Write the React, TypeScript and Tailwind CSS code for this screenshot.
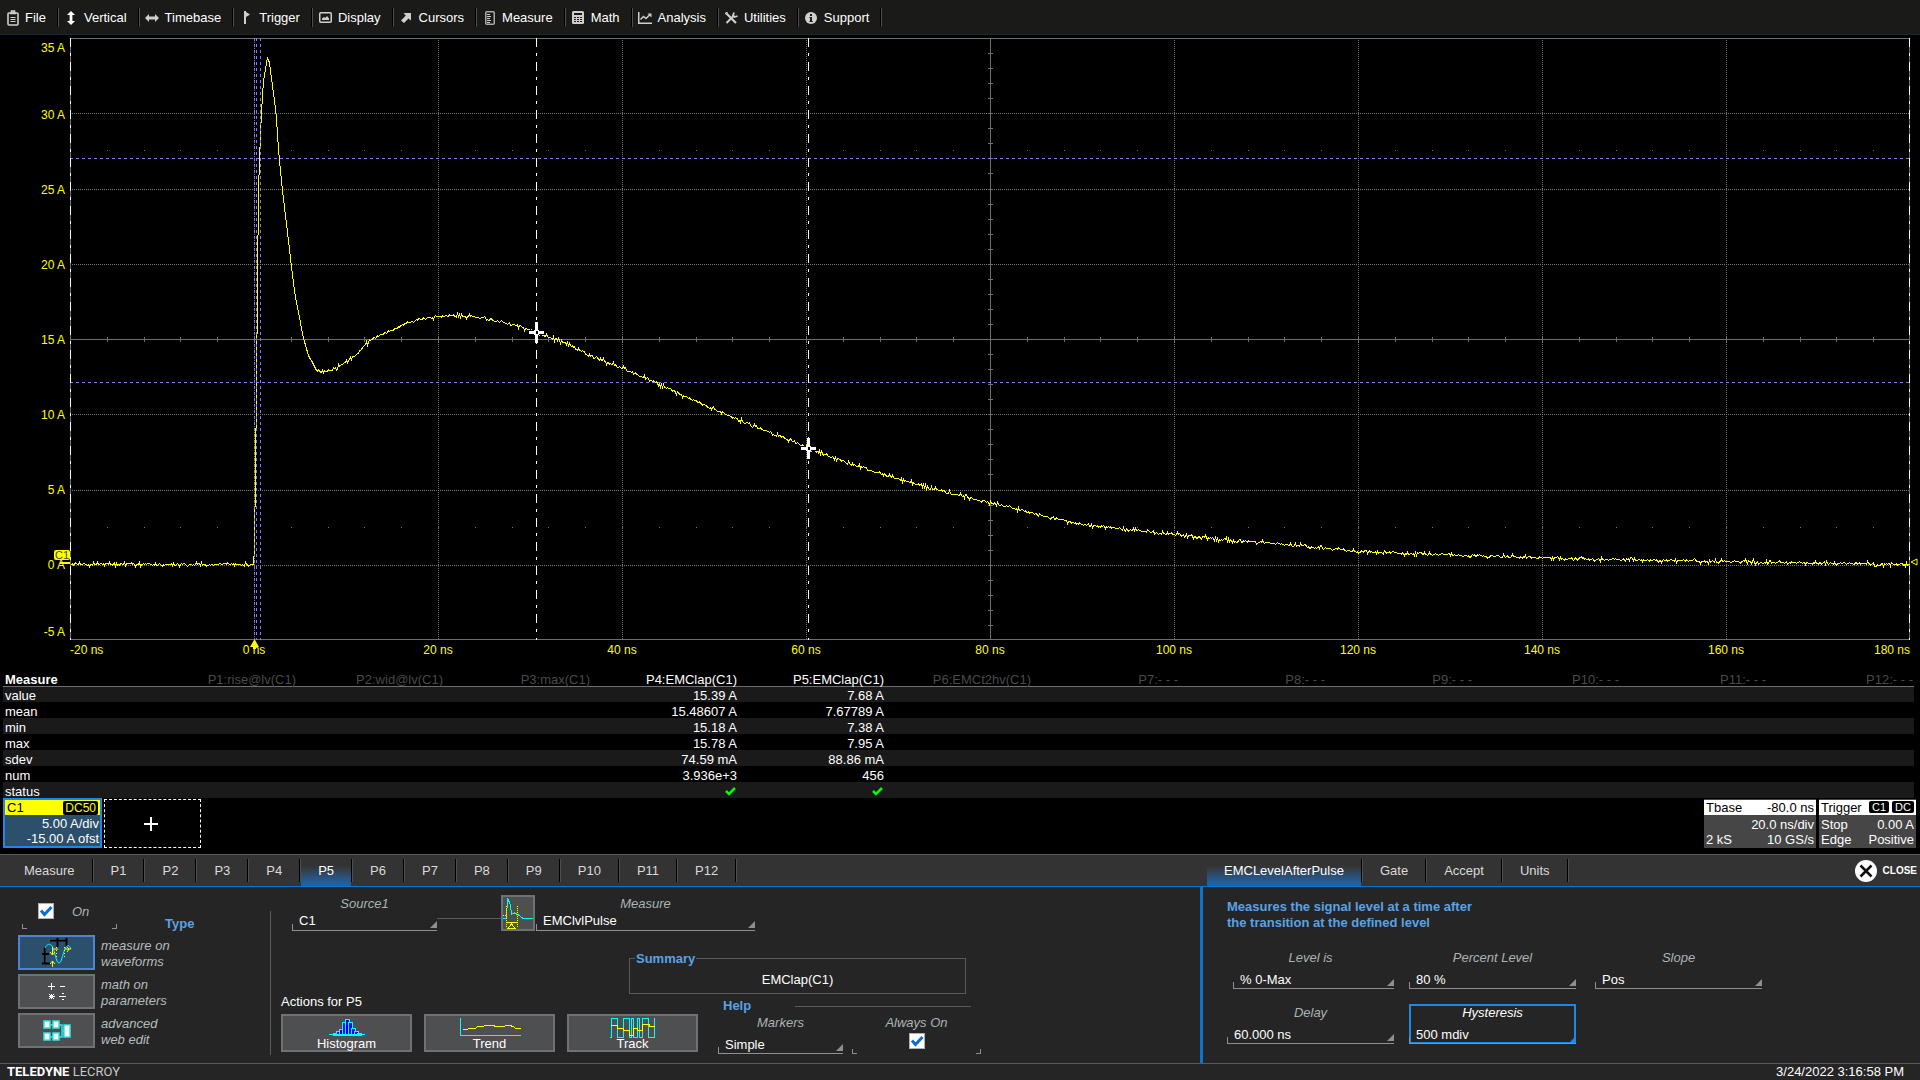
import React, { useId } from 'react';
import clsx from 'clsx';

/* ---------- menu bar ---------- */

const menuIcons: Record<string, React.ReactNode> = {
    File: (
        <svg width="12" height="16" viewBox="0 0 12 16" fill="none" stroke="#cfcfcf">
            <rect x="1" y="3" width="10" height="12" rx="1" strokeWidth="1.6" />
            <path d="M3 3.5h6M4.5 1h3v2h-3z" strokeWidth="1.6" />
            <path d="M3.5 7.5h5M3.5 9.5h5M3.5 11.5h5" />
        </svg>
    ),
    Vertical: (
        <svg width="8" height="14" viewBox="0 0 8 14" fill="#fff">
            <path d="M4 0l4 4H5.4v6H8l-4 4-4-4h2.6V4H0z" />
        </svg>
    ),
    Timebase: (
        <svg width="14" height="8" viewBox="0 0 14 8" fill="#cfcfcf">
            <path d="M0 4l4-4v2.6h6V0l4 4-4 4V5.4H4V8z" />
        </svg>
    ),
    Trigger: (
        <svg width="6" height="13" viewBox="0 0 6 13" fill="#cfcfcf">
            <path d="M0 0h2v13H0zM2 1l4 2.5L2 6z" />
        </svg>
    ),
    Display: (
        <svg width="13" height="11" viewBox="0 0 13 11">
            <rect x="0.75" y="0.75" width="11.5" height="9.5" rx="1" fill="none" stroke="#cfcfcf" strokeWidth="1.5" />
            <path d="M3 8V6.5L5 5l1.2 1L8 4l2 2.5V8z" fill="#cfcfcf" />
        </svg>
    ),
    Cursors: (
        <svg width="10" height="11" viewBox="0 0 10 11" fill="#cfcfcf">
            <path d="M2.5 1H10v7.5L7.5 6.5 3 11 0 8.5 4.8 3.4z" />
        </svg>
    ),
    Measure: (
        <svg width="10" height="14" viewBox="0 0 10 14">
            <rect x="0.75" y="0.75" width="8.5" height="12.5" rx="1" fill="none" stroke="#a8a8a8" strokeWidth="1.5" />
            <path d="M2 3.5h3M2 5.5h4M2 7.5h3M2 9.5h4M2 11.5h3" stroke="#cfcfcf" />
        </svg>
    ),
    Math: (
        <svg width="12" height="13" viewBox="0 0 12 13">
            <rect width="12" height="13" rx="1.5" fill="#cfcfcf" />
            <rect x="2" y="2" width="8" height="2" fill="#1a1a19" />
            <path d="M2 6.5h8M2 8.5h8M2 10.5h8" stroke="#1a1a19" strokeDasharray="2 1" />
        </svg>
    ),
    Analysis: (
        <svg width="14" height="12" viewBox="0 0 14 12" fill="none" stroke="#cfcfcf" strokeWidth="1.5">
            <path d="M0.75 0v11.25H14M2.5 7.5l3-3 2.5 2 4-4" />
            <path d="M9.5 1.500h4v4z" fill="#cfcfcf" stroke="none" />
        </svg>
    ),
    Utilities: (
        <svg width="13" height="12" viewBox="0 0 13 12" fill="none" stroke="#cfcfcf">
            <path d="M1.5 1.5L11 11" strokeWidth="2.2" />
            <path d="M1.5 11L9 3.5" strokeWidth="2" />
            <path d="M9 0.5l-1 3 1.5 1.5 3-1" strokeWidth="1.8" />
            <path d="M0 2l2.5-2" strokeWidth="1.5" />
        </svg>
    ),
    Support: (
        <svg width="12" height="12" viewBox="0 0 12 12">
            <circle cx="6" cy="6" r="6" fill="#cfcfcf" />
            <path d="M5 2h2v2H5zM4.5 5H7v4h.7v1H4.5V9H5V6h-.5z" fill="#1a1a19" />
        </svg>
    ),
};

const menuItems = ['File', 'Vertical', 'Timebase', 'Trigger', 'Display', 'Cursors', 'Measure', 'Math', 'Analysis', 'Utilities', 'Support'];

function Separator() {
    return <span className="w-[2px] self-stretch border-l border-r border-l-black border-r-[#4e4e4e]" />;
}

function MenuBar() {
    return (
        <nav className="flex h-[35px] items-stretch border-b border-[#1b2735] bg-[#1a1a19] pt-2 pb-[7px]">
            {menuItems.map((item) => (
                <button key={item} className="flex items-stretch text-white">
                    <span className="flex w-[25px] items-center justify-center">{menuIcons[item]}</span>
                    <span className="self-center pr-[11px]">{item}</span>
                    <Separator />
                </button>
            ))}
        </nav>
    );
}

/* ---------- waveform grid ---------- */

// trace samples in plot pixels
const samples: [number, number][] = [
    [0, 526], [183, 526], [184, 510], [185, 430], [186, 352], [187, 244], [188, 152], [189, 122], [190, 95], [191, 74],
    [192, 57], [193, 42], [195, 31], [197, 19], [199, 24], [200, 33], [202, 47], [204, 62], [206, 80], [207, 97],
    [209, 122], [212, 152], [215, 177], [218, 202], [222, 237], [225, 259], [229, 279], [233, 300], [238, 317],
    [242, 324], [246, 332], [252, 333], [262, 332], [270, 327], [285, 317], [295, 306], [303, 300], [320, 292],
    [330, 287], [345, 282], [360, 279], [375, 277], [390, 277], [410, 279], [430, 283], [450, 288], [466, 294],
    [490, 303], [520, 317], [552, 330], [580, 342], [610, 356], [640, 369], [670, 382], [700, 394], [738, 410],
    [770, 422], [810, 435], [850, 447], [890, 457], [920, 464], [960, 474], [1007, 485], [1055, 491], [1106, 496],
    [1150, 501], [1204, 505], [1289, 513], [1340, 515], [1399, 517], [1465, 519], [1534, 521], [1657, 523],
    [1767, 525], [1840, 526],
];

function tracePath() {
    let seed = 7;
    const rand = () => {
        seed = (seed * 16807) % 2147483647;
        return seed / 2147483647;
    };
    let d = '';
    let k = 0;
    for (let x = 0; x < 1840; x++) {
        while (samples[k + 1][0] < x) k++;
        const [x0, y0] = samples[k];
        const [x1, y1] = samples[k + 1];
        let y = y0 + ((y1 - y0) * (x - x0)) / (x1 - x0);
        const r = rand();
        if (x < 180 || x > 246) {
            if (r < 0.22) y += 1;
            else if (r < 0.44) y -= 1;
            else if (r < 0.51) y += 2;
            else if (r < 0.58) y -= 2;
        }
        d += `${d ? 'L' : 'M'}${x + 0.5} ${Math.round(y) + 0.5}`;
    }
    return d;
}

const trace = tracePath();
const gridX = [184, 368, 552, 736, 1104, 1288, 1472, 1656];
const gridY = [75, 151, 226, 376, 452, 527];
const ticksX = Array.from({ length: 49 }, (_, i) => Math.round((i + 1) * 36.8));
const ticksY = Array.from({ length: 39 }, (_, i) => Math.round((i + 1) * 15.05));
const markers = [[466, 294], [738, 410]];

function Plot() {
    return (
        <svg className="min-w-0 flex-1" viewBox="0 0 1840 602" preserveAspectRatio="none" fill="none" shapeRendering="crispEdges">
            <g stroke="#787878" strokeDasharray="1 1">
                {gridX.map((x) => <path key={x} d={`M${x + 0.5} 0V602`} />)}
                {gridY.map((y) => <path key={y} d={`M0 ${y + 0.5}H1840`} />)}
            </g>
            <g stroke="#6e6e6e">
                <path d="M0.5 0.5H1839.5V601.5H0.5zM0 301.5H1840M920.5 0V602" />
                {ticksX.map((x) => <path key={x} d={`M${x + 0.5} 299V304M${x} 112.5h1M${x} 489.5h1`} />)}
                {ticksY.map((y) => <path key={y} d={`M918 ${y + 0.5}H923`} />)}
            </g>
            <path d={trace} stroke="#ffff00" />
            <path d="M184.5 0V602M186.5 0V602M190.5 0V602M0 120.5H1840M0 344.5H1840" stroke="#8080ff" strokeDasharray="3 3" />
            <path d="M0.5 0V602M466.5 0V602M738.5 0V602M1839.5 0V602" stroke="#fff" strokeDasharray="9 6 3 6" />
            {markers.map(([x, y]) => (
                <g key={x}>
                    <path d={`M${x - 9} ${y - 2}h19v5h-19z`} fill="#000" />
                    <path d={`M${x - 1} ${y - 10}h3v21h-3zM${x - 7} ${y - 1}h15v3h-15z`} fill="#fff" />
                    <path d={`M${x - 2} ${y - 2}h5v5h-5z`} fill="#fff" />
                    <path d={`M${x} ${y - 1}h2v3h-2z`} fill="#000" />
                </g>
            ))}
        </svg>
    );
}

const amps = ['35 A', '30 A', '25 A', '20 A', '15 A', '10 A', '5 A', '0 A', '-5 A'];
const times = ['-20 ns', '0 ns', '20 ns', '40 ns', '60 ns', '80 ns', '100 ns', '120 ns', '140 ns', '160 ns', '180 ns'];

function WaveformGrid() {
    return (
        <main className="flex min-h-[400px] flex-1 flex-col pt-[3px] text-[12px] text-[#ffff00]">
            <div className="flex flex-1">
                <div className="flex w-[70px] flex-col pt-[2px] pr-[5px] text-right">
                    {amps.map((a, i) => (
                        <div
                            key={a}
                            className={clsx(
                                'flex justify-end',
                                i === 0 ? 'flex-1 items-start' : i === 8 ? 'flex-1 items-end' : 'flex-[2] items-center'
                            )}
                        >
                            {a === '0 A' ? (
                                <span className="relative leading-[10px]">
                                    {a}
                                    <span className="absolute -top-[10px] -right-[5px] flex h-[10px] w-4 items-center justify-center rounded-[2px] bg-[#ffff00] text-[11px] leading-[10px] text-[#4a4a00]">
                                        C1
                                    </span>
                                    <span className="absolute top-[2px] -right-[5px] h-[2px] w-[10px] bg-[#ffff00]" />
                                </span>
                            ) : (
                                <span>{a}</span>
                            )}
                        </div>
                    ))}
                </div>
                <Plot />
                <div className="flex w-[10px] flex-col">
                    <span className="flex-[7]" />
                    <svg className="h-2" width="8" height="8" fill="none" stroke="#ffff00">
                        <path d="M1 4L7 1V7z" />
                    </svg>
                    <span className="flex-1" />
                </div>
            </div>
            <div className="flex h-[30px] pt-[2px] pr-[10px] pl-[70px]">
                {times.map((t, i) => (
                    <div
                        key={t}
                        className={clsx(i === 0 ? 'flex-1 text-left' : i === 10 ? 'flex-1 text-right' : 'flex-[2] text-center')}
                    >
                        {t === '0 ns' ? (
                            <span className="relative">
                                {t}
                                <svg className="absolute -top-[3px] left-1/2 -ml-1" width="9" height="9" fill="#ffff00">
                                    <path d="M4 0h1l4 7H6v2H3V7H0z" />
                                </svg>
                            </span>
                        ) : (
                            t
                        )}
                    </div>
                ))}
            </div>
        </main>
    );
}

/* ---------- measure table ---------- */

const params = [
    'P1:rise@lv(C1)', 'P2:wid@lv(C1)', 'P3:max(C1)', 'P4:EMClap(C1)', 'P5:EMClap(C1)', 'P6:EMCt2hv(C1)',
    'P7:- - -', 'P8:- - -', 'P9:- - -', 'P10:- - -', 'P11:- - -', 'P12:- - -',
];

const stats: [string, string, string][] = [
    ['value', '15.39 A', '7.68 A'],
    ['mean', '15.48607 A', '7.67789 A'],
    ['min', '15.18 A', '7.38 A'],
    ['max', '15.78 A', '7.95 A'],
    ['sdev', '74.59 mA', '88.86 mA'],
    ['num', '3.936e+3', '456'],
    ['status', 'ok', 'ok'],
];

function Cell({ value }: { value: string }) {
    if (value !== 'ok') return <>{value}</>;
    return (
        <svg className="ml-auto block" width="12" height="10" fill="none" stroke="#00ff00" strokeWidth="2.5">
            <path d="M1 4l3 3 6-6" />
        </svg>
    );
}

function MeasureTable() {
    return (
        <div className="pr-[6px] pl-[3px]">
            <table className="w-full table-fixed border-separate border-spacing-0 leading-[12px] text-white">
                <thead>
                    <tr className="h-4">
                        <th scope="col" className="pt-1 pl-[2px] text-left font-bold">Measure</th>
                        {params.map((p, i) => (
                            <th
                                key={p}
                                scope="col"
                                className={clsx(
                                    'pt-1 pr-px text-right font-normal whitespace-nowrap',
                                    i === 3 || i === 4 ? 'text-white' : 'text-[#4a4a4a]'
                                )}
                            >
                                {p}
                            </th>
                        ))}
                    </tr>
                </thead>
                <tbody>
                    {stats.map(([name, p4, p5], row) => (
                        <tr key={name} className={clsx('h-4', row % 2 === 0 && 'bg-[#1a1a1a]')}>
                            {[name, '', '', '', p4, p5, '', '', '', '', '', '', ''].map((v, i) => {
                                const cls = clsx(
                                    row === 0 ? 'border-t border-[#6e6e6e] pt-[3px]' : 'pt-1',
                                    i === 0 ? 'pl-[2px] text-left font-normal' : 'pr-px text-right'
                                );
                                return i === 0 ? (
                                    <th key={i} scope="row" className={cls}>{v}</th>
                                ) : (
                                    <td key={i} className={cls}><Cell value={v} /></td>
                                );
                            })}
                        </tr>
                    ))}
                </tbody>
            </table>
        </div>
    );
}

/* ---------- descriptor boxes ---------- */

function Descriptors() {
    return (
        <div className="flex h-14 items-start pr-1 pb-[6px] pl-[3px] leading-[15px] text-white">
            <button className="h-[50px] w-[99px] border-2 border-[#1a8ae8] bg-[#2c4f6c] text-right">
                <span className="flex h-[15px] items-center justify-between bg-[#ffff00] px-[2px] text-black">
                    C1
                    <span className="rounded-[2px] bg-black px-[2px] text-[12px] leading-[14px] text-[#ffff00]">DC50</span>
                </span>
                <span className="block pt-px pr-px">5.00 A/div</span>
                <span className="block pr-px">-15.00 A ofst</span>
            </button>
            <button
                aria-label="Add trace"
                className="mt-px ml-[2px] flex h-[49px] w-[97px] items-center justify-center border border-dashed border-white pr-[3px]"
            >
                <svg width="14" height="14" stroke="#fff" strokeWidth="2">
                    <path d="M7 0V14M0 7H14" />
                </svg>
            </button>
            <button className="mt-px ml-auto h-[49px] w-[112px] bg-[#464646]">
                <span className="flex h-[15px] justify-between bg-white px-[2px] text-black"><span>Tbase</span><span>-80.0 ns</span></span>
                <span className="block px-[2px] pt-[2px] text-right">20.0 ns/div</span>
                <span className="flex justify-between px-[2px]"><span>2 kS</span><span>10 GS/s</span></span>
            </button>
            <button className="mt-px ml-[3px] h-[49px] w-[97px] bg-[#464646]">
                <span className="flex h-[15px] items-start bg-white px-[2px] text-black">
                    <span className="flex-1 text-left">Trigger</span>
                    <span className="mt-px rounded-[2px] bg-black px-[3px] text-[11px] leading-[12px] text-white">C1</span>
                    <span className="mt-px ml-[3px] rounded-[2px] bg-black px-[3px] text-[11px] leading-[12px] text-white">DC</span>
                </span>
                <span className="flex justify-between px-[2px] pt-[2px]"><span>Stop</span><span>0.00 A</span></span>
                <span className="flex justify-between px-[2px]"><span>Edge</span><span>Positive</span></span>
            </button>
        </div>
    );
}

/* ---------- dialog ---------- */

function Tab({ label, active, first }: { label: string; active?: boolean; first?: boolean }) {
    return (
        <button role="tab" aria-selected={!!active} className={clsx('flex items-stretch', first && 'pl-[7px]')}>
            <span
                className={clsx(
                    'flex items-center px-[17px]',
                    active ? 'bg-linear-to-b from-[#333333] from-35% to-[#0b67b6] text-white' : 'text-[#dadada]'
                )}
            >
                {label}
            </span>
            <span className="flex items-stretch py-1"><Separator /></span>
        </button>
    );
}

interface FieldProps {
    label: string;
    value: string;
    kind?: 'select' | 'text';
    tall?: boolean;
    focused?: boolean;
    className?: string;
    controlClass?: string;
}

function Field({ label, value, kind = 'select', tall, focused, className, controlClass }: FieldProps) {
    const id = useId();
    const control = clsx(
        'block h-full w-full appearance-none bg-transparent pl-[7px] text-white outline-none',
        tall ? 'pt-[6px]' : 'pt-px'
    );
    return (
        <div className={clsx('flex flex-col', focused && 'outline-2 -outline-offset-2 outline-[#1a8ae8]', className)}>
            <label
                htmlFor={id}
                className={clsx('h-4 text-center leading-[18px] italic', focused ? 'text-white' : 'text-[#a9b4b4]')}
            >
                {label}
            </label>
            <div className={clsx('relative border-b border-[#8f8f8f]', tall ? 'h-6' : 'h-5', controlClass)}>
                {kind === 'select' ? (
                    <select id={id} className={control} defaultValue={value}>
                        <option>{value}</option>
                    </select>
                ) : (
                    <input id={id} type="text" className={control} defaultValue={value} />
                )}
                <span className="pointer-events-none absolute bottom-0 left-0 h-[6px] w-px bg-[#8f8f8f]" />
                <svg
                    className={clsx('pointer-events-none absolute right-0', focused ? 'bottom-0 text-[#1a8ae8]' : 'bottom-[2px] text-[#8f8f8f]')}
                    width="7"
                    height="7"
                    fill="currentColor"
                >
                    <path d="M0 7L7 0V7z" />
                </svg>
            </div>
        </div>
    );
}

function Check({ id }: { id: string }) {
    return (
        <span className="relative block size-4">
            <input id={id} type="checkbox" defaultChecked className="peer block size-4 appearance-none border border-[#b0b0b0] bg-white" />
            <svg className="pointer-events-none absolute inset-0 hidden peer-checked:block" width="16" height="16" fill="none" stroke="#0a6fd0" strokeWidth="3">
                <path d="M3 7.500l3.500 4L13.500 4" />
            </svg>
        </span>
    );
}

// corner marks under a check box
function Corners() {
    return (
        <>
            <span className="absolute bottom-0 left-0 size-[5px] border-b border-l border-[#8f8f8f]" />
            <span className="absolute right-0 bottom-0 size-[5px] border-r border-b border-[#8f8f8f]" />
        </>
    );
}

const typeIcons = {
    waveforms: (
        <svg width="32" height="29" fill="none">
            <path d="M2.5 9v17M8.5 1.5H26" stroke="#777" />
            <path d="M3.5 9v17M1 16h7M1 25.5h8M9 2.5h17M16.5 0v9M25.5 0v9" stroke="#000" strokeWidth="2" />
            <path d="M4 10c2-4 5-5 7-2 3 5 4 17 7 17s4-12 7-16c2-2 3-2 5 2" stroke="#00ffff" />
            <path d="M11.5 9v8M9 14l2.5 3 2.5-3M11.5 29v-6M9 26l2.5-3 2.5 3M13 11h4M24 11h6M26 9l2 2-2 3" stroke="#ffff00" />
            <path d="M15.5 9v12M23.5 9v12" stroke="#ffff00" strokeDasharray="1 2" />
        </svg>
    ),
    math: (
        <svg width="20" height="20" stroke="#fff" shapeRendering="crispEdges">
            <path d="M4.500 1v7M1 4.500h7M13 4.500h5M12 14.500h7" />
            <path d="M15 11.500h2M15 17.500h2M2 12l5 5M7 12l-5 5M1.500 14.500h6M4.500 12v5" />
        </svg>
    ),
    web: (
        <svg width="28" height="22" fill="#fff" stroke="#2fe6e6" strokeWidth="1.5">
            <path d="M7 5h4M7 17h4M16 5h3v6h3M16 17h3v-5" fill="none" />
            <rect x="1" y="1" width="6" height="7" />
            <rect x="10" y="1" width="6" height="7" />
            <rect x="1" y="13" width="6" height="7" />
            <rect x="10" y="13" width="6" height="7" />
            <rect x="21" y="5" width="6" height="12" />
        </svg>
    ),
};

function TypeRow({ icon, lines, active }: { icon: React.ReactNode; lines: [string, string]; active?: boolean }) {
    return (
        <button className="flex h-[35px] items-center text-left italic">
            <span
                className={clsx(
                    'flex h-[35px] w-[77px] items-center justify-center border-2',
                    active ? 'border-[#4a84dc] bg-[#2c4f6c]' : 'border-[#707172] bg-[#4e4f51]'
                )}
            >
                {icon}
            </span>
            <span className="pt-[2px] pl-[6px] text-[#b4bebe]">
                {lines[0]}
                <br />
                {lines[1]}
            </span>
        </button>
    );
}

const actions = [
    {
        name: 'Histogram',
        icon: (
            <svg width="36" height="18" shapeRendering="crispEdges">
                <path d="M4 17v-2h3v-2h3v-2h3V4h3V1h4v3h3v6h3v3h3v2h3v2z" fill="#0000ff" stroke="#00ffff" />
                <path d="M7.5 15v2M10.5 13v4M13.5 11v6M16.5 4v13M19.5 4v13M22.5 10v7M25.5 13v4M28.5 15v2M0 16.5h36" stroke="#00ffff" />
            </svg>
        ),
    },
    {
        name: 'Trend',
        icon: (
            <svg width="62" height="18" fill="none" shapeRendering="crispEdges">
                <path d="M1.5 0V17.5H62" stroke="#00ffff" />
                <path d="M4 11.5h4l2-1h6l3-2h5l2-1h8l3 1h8l2-1h4l3 1 3 2h4l2 1" stroke="#ffff00" />
            </svg>
        ),
    },
    {
        name: 'Track',
        icon: (
            <svg width="46" height="20" fill="none" shapeRendering="crispEdges">
                <path d="M0 19.5h1.5V0.5h6V19.5h6V0.5h6V19.5h2V0.5h2V19.5h4V0.5h2V19.5h3V0.5h6V19.5h6V0" stroke="#00ffff" />
                <path d="M1 7.5h6v3h6v2h6v5h4v-7h4v2h5V6.5h7v2h6" stroke="#ffff00" />
            </svg>
        ),
    },
];

function LeftPage() {
    return (
        <section className="flex min-w-0 flex-1">
            <div className="flex w-[270px] flex-col gap-1 pt-[14px] pl-[18px]">
                <div className="flex h-[30px] items-end">
                    <div className="relative mb-[2px] ml-1 flex h-7 w-[95px] items-start gap-[18px] pt-[2px] pl-4">
                        <Check id="param-on" />
                        <label htmlFor="param-on" className="leading-[18px] text-[#a9b4b4] italic">On</label>
                        <Corners />
                    </div>
                    <h2 className="ml-12 h-4 leading-[18px] font-bold text-[#5aa2e4]">Type</h2>
                </div>
                <TypeRow active icon={typeIcons.waveforms} lines={['measure on', 'waveforms']} />
                <TypeRow icon={typeIcons.math} lines={['math on', 'parameters']} />
                <TypeRow icon={typeIcons.web} lines={['advanced', 'web edit']} />
            </div>
            <span className="mt-6 mb-2 w-px bg-[#5a5a5a]" />
            <div className="flex flex-col pt-2 pl-[10px]">
                <div className="flex items-end pl-[11px]">
                    <Field label="Source1" value="C1" className="w-[145px]" />
                    <span className="mb-3 h-px w-16 bg-[#5a5a5a]" />
                    <button aria-label="Select measurement" className="h-9 w-[34px] border-2 border-[#707172] bg-[#4e4f51]">
                        <svg width="30" height="32" fill="none" shapeRendering="crispEdges">
                            <path d="M0 21.5h3.5L4.5 1l3 7 1 9 3-1 4 2 4 3 2 .5H30" stroke="#00ffff" />
                            <path d="M3.5 9v22M14.5 9v22M0 18.5h4" stroke="#ffff00" strokeDasharray="1 1" />
                            <path d="M3 25.5h12M5 31.5h7l-3.5-4.5z" stroke="#ffff00" />
                        </svg>
                    </button>
                    <Field label="Measure" value="EMClvlPulse" className="ml-px w-[219px]" />
                </div>
                <fieldset className="mt-[19px] ml-[348px] h-11 w-[337px] border border-[#5a5a5a]">
                    <legend className="ml-[5px] h-4 px-px leading-[18px] font-bold text-[#5aa2e4]">Summary</legend>
                    <p className="pt-[6px] text-center text-white">EMClap(C1)</p>
                </fieldset>
                <div className="flex items-start">
                    <div className="flex flex-col gap-1">
                        <h3 className="text-white">Actions for P5</h3>
                        <div className="flex gap-3">
                            {actions.map(({ name, icon }) => (
                                <button
                                    key={name}
                                    className="flex h-[38px] w-[131px] flex-col items-center justify-between border-2 border-[#707172] bg-[#4e4f51] pt-[2px] leading-[12px] text-white"
                                >
                                    {icon}
                                    <span>{name}</span>
                                </button>
                            ))}
                        </div>
                    </div>
                    <div className="pt-1 pl-5">
                        <div className="flex h-4 items-center pl-[5px]">
                            <h2 className="w-[72px] leading-[18px] font-bold text-[#5aa2e4]">Help</h2>
                            <span className="h-px w-44 bg-[#5a5a5a]" />
                        </div>
                        <div className="flex gap-[9px]">
                            <Field label="Markers" value="Simple" tall className="w-[125px]" />
                            <div className="relative flex w-[129px] flex-col items-center gap-[3px] pb-1">
                                <label htmlFor="always-on" className="h-4 leading-[18px] text-[#a9b4b4] italic">Always On</label>
                                <Check id="always-on" />
                                <Corners />
                            </div>
                        </div>
                    </div>
                </div>
            </div>
        </section>
    );
}

function RightPage() {
    return (
        <section className="w-[37.5%] border-l-[3px] border-[#0b74d1] pt-3 pl-6">
            <p className="font-bold text-[#5aa2e4]">
                Measures the signal level at a time after
                <br />
                the transition at the defined level
            </p>
            <div className="mt-[18px] grid grid-cols-[182px_186px_167px] gap-y-[15px]">
                <Field tall label="Level is" value="% 0-Max" className="w-[167px]" controlClass="ml-[6px]" />
                <Field tall label="Percent Level" kind="text" value="80 %" className="w-[167px]" />
                <Field tall label="Slope" value="Pos" className="w-[167px]" />
                <Field tall label="Delay" kind="text" value="60.000 ns" className="w-[167px]" />
                <Field tall focused label="Hysteresis" kind="text" value="500 mdiv" className="w-[167px]" />
            </div>
        </section>
    );
}

function Dialog() {
    return (
        <div className="border-t border-b border-[#5a5a5a] bg-[#252525]">
            <div className="flex h-8 border-b border-[#0b74d1] bg-[#333333]">
                <div role="tablist" className="flex flex-1">
                    {['Measure', 'P1', 'P2', 'P3', 'P4', 'P5', 'P6', 'P7', 'P8', 'P9', 'P10', 'P11', 'P12'].map((t) => (
                        <Tab key={t} label={t} active={t === 'P5'} first={t === 'Measure'} />
                    ))}
                </div>
                <div className="flex w-[37.5%] pr-[3px] pl-[7px]">
                    <div role="tablist" className="flex flex-1">
                        {['EMCLevelAfterPulse', 'Gate', 'Accept', 'Units'].map((t, i) => (
                            <Tab key={t} label={t} active={i === 0} />
                        ))}
                    </div>
                    <button className="flex items-center gap-[6px] text-[10px] font-bold text-white">
                        <svg width="22" height="22">
                            <circle cx="11" cy="11" r="11" fill="#fff" />
                            <path d="M5.5 5.5l11 11M16.5 5.5l-11 11" stroke="#111" strokeWidth="2.5" />
                        </svg>
                        CLOSE
                    </button>
                </div>
            </div>
            <div className="flex h-44">
                <LeftPage />
                <RightPage />
            </div>
        </div>
    );
}

export default function App() {
    return (
        <div className="flex min-h-screen flex-col bg-black font-['Liberation_Sans',Arial,sans-serif] text-[13px] leading-4">
            <MenuBar />
            <WaveformGrid />
            <MeasureTable />
            <Descriptors />
            <Dialog />
            <footer className="flex h-4 items-center justify-between bg-[#252525] pr-4 pl-[7px] text-white">
                <span className="font-[Roboto,sans-serif] text-[13px]">
                    <b>TELEDYNE</b> <span className="text-[#c8c8c8]">LECROY</span>
                </span>
                <time>3/24/2022 3:16:58 PM</time>
            </footer>
        </div>
    );
}
